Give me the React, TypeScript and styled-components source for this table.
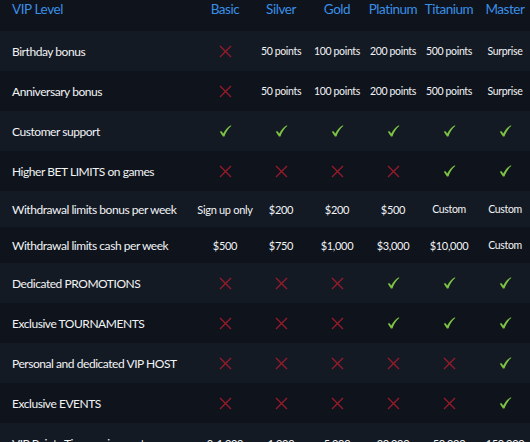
import React from "react";
import styled, { createGlobalStyle } from "styled-components";

const Global = createGlobalStyle`
  html, body { margin: 0; padding: 0; background: #0e131c; }
  body { font-family: "Lato", "Open Sans", sans-serif; overflow: hidden; }
`;

const Table = styled.div`
  width: 530px;
  height: 442px;
  overflow: hidden;
  background: #0e131c;
`;

const Row = styled.div<{ $h: number; $alt?: boolean }>`
  display: grid;
  grid-template-columns: 197px repeat(6, 56px);
  height: ${(p) => p.$h}px;
  align-items: center;
  background: ${(p) => (p.$alt ? "#141a24" : "#0e131c")};
`;

const HeaderRow = styled(Row)`
  align-items: start;
  padding-top: 1px;
`;

const HeadLabel = styled.div`
  padding-left: 12px;
  color: #3b8fe6;
  font-size: 13.5px;
  letter-spacing: -0.4px;
`;

const HeadCell = styled.div`
  text-align: center;
  color: #3b8fe6;
  font-size: 13.5px;
  letter-spacing: -0.45px;
  white-space: nowrap;
`;

const Label = styled.div`
  padding-left: 12px;
  color: #f2f3f5;
  font-size: 12px;
  white-space: nowrap;
  letter-spacing: -0.45px;
`;

const Cell = styled.div<{ $small?: boolean }>`
  display: flex;
  justify-content: center;
  align-items: center;
  color: #f2f3f5;
  font-size: ${(p) => (p.$small ? "10.5px" : "11px")};
  white-space: nowrap;
  letter-spacing: ${(p) => (p.$small ? "-0.35px" : "-0.3px")};
`;

const Cross = () => (
  <svg width="13" height="13" viewBox="0 0 13 13">
    <path d="M1 1 L12 12 M12 1 L1 12" stroke="#9a1a2b" strokeWidth="1.3" fill="none" />
  </svg>
);

const Check = () => (
  <svg width="13" height="12" viewBox="0 0 13 12">
    <path
      d="M0.8 6.8 L2.3 5.9 L4.3 8.5 C6 5 8.6 2.1 11.9 0.3 L12.3 1 C9.3 3.4 7 7.1 5.4 11.5 L3.9 11.5 Z"
      fill="#7cc142"
    />
  </svg>
);

type V = string;

const X = "x";
const C = "v";

const columns = ["Basic", "Silver", "Gold", "Platinum", "Titanium", "Master"];

const rows: { label: string; h: number; values: V[] }[] = [
  { label: "Birthday bonus", h: 40, values: [X, "50 points", "100 points", "200 points", "500 points", "Surprise"] },
  { label: "Anniversary bonus", h: 40, values: [X, "50 points", "100 points", "200 points", "500 points", "Surprise"] },
  { label: "Customer support", h: 40, values: [C, C, C, C, C, C] },
  { label: "Higher BET LIMITS on games", h: 40, values: [X, X, X, X, C, C] },
  { label: "Withdrawal limits bonus per week", h: 36, values: ["Sign up only", "$200", "$200", "$500", "Custom", "Custom"] },
  { label: "Withdrawal limits cash per week", h: 36, values: ["$500", "$750", "$1,000", "$3,000", "$10,000", "Custom"] },
  { label: "Dedicated PROMOTIONS", h: 40, values: [X, X, X, C, C, C] },
  { label: "Exclusive TOURNAMENTS", h: 40, values: [X, X, X, C, C, C] },
  { label: "Personal and dedicated VIP HOST", h: 40, values: [X, X, X, X, X, C] },
  { label: "Exclusive EVENTS", h: 40, values: [X, X, X, X, X, C] },
  { label: "VIP Points Tier requirements", h: 40, values: ["0-1,000", "1,000", "5,000", "20,000", "50,000", "150,000"] },
];

const smallWords = /points|Surprise|Custom/;

export default function App() {
  return (
    <>
      <Global />
      <Table>
        <HeaderRow $h={30}>
          <HeadLabel>VIP Level</HeadLabel>
          {columns.map((c) => (
            <HeadCell key={c}>{c}</HeadCell>
          ))}
        </HeaderRow>
        {rows.map((r, i) => (
          <Row key={r.label} $h={r.h} $alt={i % 2 === 0}>
            <Label>{r.label}</Label>
            {r.values.map((v, j) => (
              <Cell key={j} $small={smallWords.test(v)}>
                {v === X ? <Cross /> : v === C ? <Check /> : v}
              </Cell>
            ))}
          </Row>
        ))}
      </Table>
    </>
  );
}
